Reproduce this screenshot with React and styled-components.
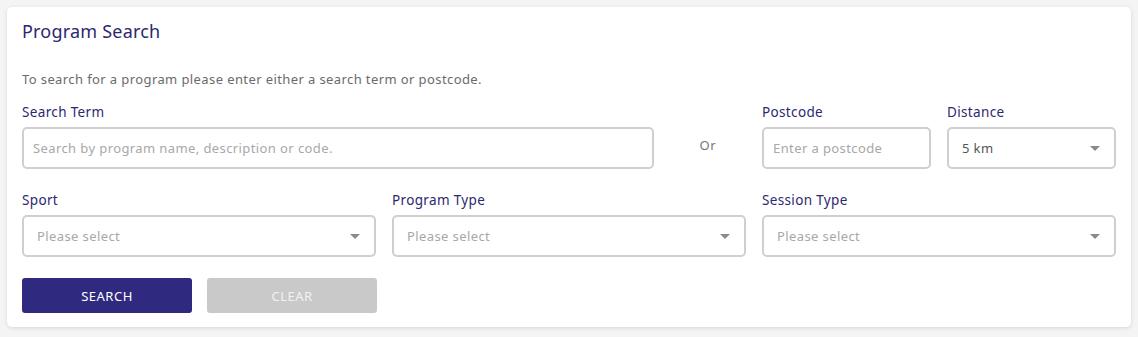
import React from "react";
import styled, { createGlobalStyle } from "styled-components";

const Global = createGlobalStyle`
  html, body { margin: 0; padding: 0; background: #f4f4f4; }
  body { font-family: "Noto Sans", "Open Sans", sans-serif; }
  * { box-sizing: border-box; }
`;

const Page = styled.div`
  padding: 7px 7px 10px 7px;
`;

const Card = styled.section`
  background: #fff;
  border-radius: 5px;
  box-shadow: 0 1px 4px rgba(0, 0, 0, 0.12);
  padding: 12px 15px 14px 15px;
  height: 320px;
`;

const Title = styled.h2`
  margin: 0;
  font-size: 18px;
  font-weight: 400;
  color: #2c2870;
  line-height: 24px;
  letter-spacing: 0.2px;
`;

const Intro = styled.p`
  margin: 27px 0 0 0;
  font-size: 13px;
  color: #6b6b6b;
  line-height: 18px;
  letter-spacing: 0.4px;
`;

const Grid = styled.div`
  display: grid;
  grid-template-columns: repeat(12, 1fr);
  column-gap: 16px;
  row-gap: 22px;
  margin-top: 15px;
`;

const Field = styled.div`
  grid-column: span ${(p) => p.$span};
  display: flex;
  flex-direction: column;
  gap: 6px;
`;

const Label = styled.label`
  font-size: 13.5px;
  color: #2c2870;
  line-height: 18px;
  height: 18px;
  letter-spacing: 0.35px;
`;

const Box = styled.div`
  position: relative;
  height: 42px;
  border: 2px solid #cfcfcf;
  border-radius: 5px;
  display: flex;
  align-items: center;
  padding: 0 ${(p) => (p.$select ? "34px" : "8px")} 0 ${(p) => (p.$select ? "13px" : "9px")};
  font-size: 13px;
  letter-spacing: 0.4px;
  color: ${(p) => (p.$filled ? "#555" : "#a8a8a8")};
  background: #fff;
`;

const Caret = styled.span`
  position: absolute;
  right: 14px;
  top: 50%;
  margin-top: -2px;
  width: 0;
  height: 0;
  border-left: 5px solid transparent;
  border-right: 5px solid transparent;
  border-top: 5px solid #8a8a8a;
`;

const OrCell = styled.div`
  grid-column: span 1;
  display: flex;
  align-items: center;
  justify-content: center;
  padding-top: 18px;
  font-size: 13px;
  letter-spacing: 0.4px;
  color: #777;
`;

const Buttons = styled.div`
  display: flex;
  gap: 15px;
  margin-top: 21px;
`;

const Button = styled.button`
  width: 170px;
  height: 35px;
  border: none;
  border-radius: 3px;
  font-family: inherit;
  font-size: 13px;
  letter-spacing: 0.5px;
  text-transform: uppercase;
  background: ${(p) => (p.$primary ? "#2f2a80" : "#c8c9c8")};
  color: ${(p) => (p.$primary ? "#ffffff" : "#f2f2f2")};
`;

function Select({ value, placeholder }) {
  return (
    <Box $select $filled={!!value}>
      {value || placeholder}
      <Caret />
    </Box>
  );
}

export default function App() {
  return (
    <>
      <Global />
      <Page>
        <Card>
          <Title>Program Search</Title>
          <Intro>To search for a program please enter either a search term or postcode.</Intro>
          <Grid>
            <Field $span={7}>
              <Label>Search Term</Label>
              <Box>Search by program name, description or code.</Box>
            </Field>
            <OrCell>Or</OrCell>
            <Field $span={2}>
              <Label>Postcode</Label>
              <Box>Enter a postcode</Box>
            </Field>
            <Field $span={2}>
              <Label>Distance</Label>
              <Select value="5 km" />
            </Field>
            <Field $span={4}>
              <Label>Sport</Label>
              <Select placeholder="Please select" />
            </Field>
            <Field $span={4}>
              <Label>Program Type</Label>
              <Select placeholder="Please select" />
            </Field>
            <Field $span={4}>
              <Label>Session Type</Label>
              <Select placeholder="Please select" />
            </Field>
          </Grid>
          <Buttons>
            <Button $primary>Search</Button>
            <Button>Clear</Button>
          </Buttons>
        </Card>
      </Page>
    </>
  );
}
